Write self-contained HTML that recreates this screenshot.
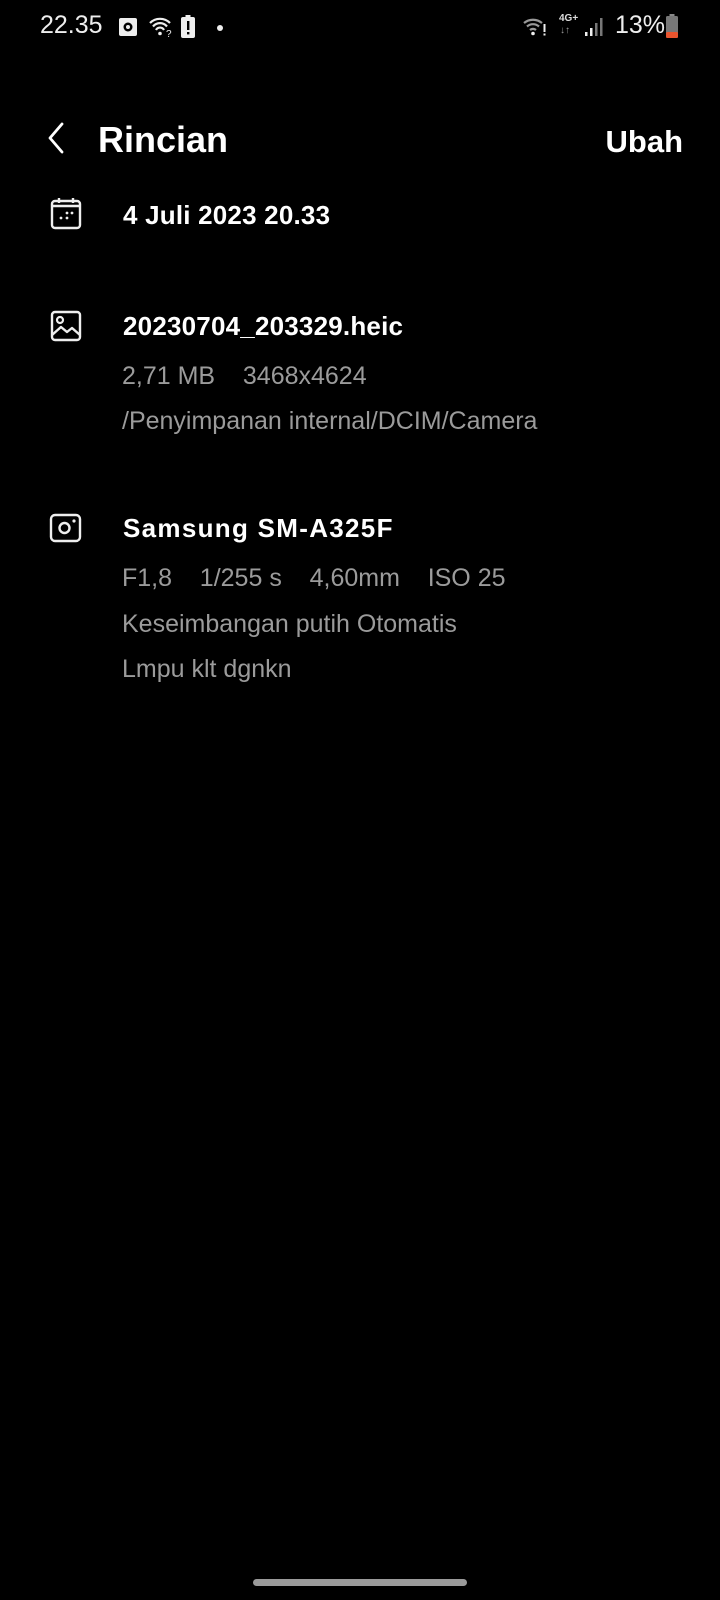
<!DOCTYPE html>
<html><head><meta charset="utf-8"><style>
body{margin:0;width:720px;height:1600px;background:#000;position:relative;overflow:hidden;font-family:"Liberation Sans",sans-serif;color:#fff}
.t{position:absolute;line-height:1;white-space:pre}
.g{color:#9b9b9b;font-size:25px}
.b{font-size:26px;font-weight:bold;letter-spacing:0.2px}
svg{position:absolute}
</style></head><body>
<div class="t" style="left:40px;top:13px;font-size:25px;color:#eee">22.35</div>
<svg style="left:118px;top:17px" width="20" height="20" viewBox="0 0 20 20"><rect x="1" y="1" width="18" height="18" rx="2" fill="#eee"/><circle cx="10" cy="10" r="4.5" fill="#000"/><circle cx="10" cy="10" r="2" fill="#eee"/></svg>
<svg style="left:148px;top:16px" width="26" height="22" viewBox="0 0 26 22"><path d="M2 7a14 14 0 0 1 20 0M5 10.5a9 9 0 0 1 14 0M8 14a4.5 4.5 0 0 1 8 0" stroke="#eee" stroke-width="2.2" fill="none"/><circle cx="12" cy="17.5" r="1.8" fill="#eee"/><text x="18" y="21" font-size="10" fill="#eee" font-family="Liberation Sans">?</text></svg>
<svg style="left:181px;top:15px" width="14" height="24" viewBox="0 0 14 24"><rect x="4.5" y="0" width="5" height="3" fill="#eee"/><rect x="0" y="2" width="14" height="21" rx="2" fill="#eee"/><rect x="6" y="6" width="2.4" height="9" fill="#000"/><rect x="6" y="17" width="2.4" height="2.4" fill="#000"/></svg>
<div style="position:absolute;left:217px;top:25px;width:6px;height:6px;border-radius:50%;background:#eee"></div>
<svg style="left:523px;top:15px" width="24" height="22" viewBox="0 0 24 22"><path d="M1 8a14 14 0 0 1 18 0M4 11.5a9 9 0 0 1 12 0M7 15a4.5 4.5 0 0 1 6 0" stroke="#999" stroke-width="2.2" fill="none"/><circle cx="10" cy="18.5" r="1.8" fill="#eee"/><rect x="20.5" y="9" width="2" height="8" fill="#eee"/><rect x="20.5" y="18.5" width="2" height="2" fill="#eee"/></svg>
<div class="t" style="left:559px;top:14px;font-size:10px;font-weight:bold;color:#ddd">4G+</div>
<div class="t" style="left:560px;top:26px;font-size:10px;color:#999">↓↑</div>
<svg style="left:584px;top:17px" width="20" height="20" viewBox="0 0 20 20"><rect x="1" y="15" width="2.5" height="4" fill="#eee"/><rect x="6" y="11" width="2.5" height="8" fill="#eee"/><rect x="11" y="6" width="2.5" height="13" fill="#777"/><rect x="16" y="1" width="2.5" height="18" fill="#777"/></svg>
<div class="t" style="left:615px;top:13px;font-size:25px;color:#eee">13%</div>
<svg style="left:666px;top:14px" width="12" height="24" viewBox="0 0 12 24"><rect x="3.5" y="0" width="5" height="2.5" fill="#888"/><rect x="0" y="2" width="12" height="22" rx="1.5" fill="#777"/><rect x="0" y="18" width="12" height="6" rx="1.5" fill="#e8542e"/></svg>

<svg style="left:46px;top:122px" width="20" height="32" viewBox="0 0 20 32"><path d="M16 2L4 16l12 14" stroke="#fff" stroke-width="2.8" fill="none" stroke-linecap="round" stroke-linejoin="round"/></svg>
<div class="t" style="left:98px;top:122px;font-size:36px;font-weight:bold">Rincian</div>
<div class="t" style="right:37px;top:126px;font-size:31px;font-weight:bold">Ubah</div>

<svg style="left:50px;top:196px" width="34" height="35" viewBox="0 0 34 35"><rect x="2" y="5" width="28" height="27" rx="3" stroke="#eee" stroke-width="2.4" fill="none"/><path d="M2 10h28M9 2v5M23 2v5" stroke="#eee" stroke-width="2.4"/><circle cx="11" cy="22" r="1.4" fill="#eee"/><circle cx="17" cy="22" r="1.4" fill="#eee"/><circle cx="17" cy="17" r="1.4" fill="#eee"/><circle cx="22" cy="17" r="1.4" fill="#eee"/></svg>
<div class="t b" style="left:123px;top:202px">4 Juli 2023 20.33</div>

<svg style="left:50px;top:310px" width="34" height="34" viewBox="0 0 34 34"><rect x="2" y="2" width="28" height="28" rx="3" stroke="#eee" stroke-width="2.4" fill="none"/><circle cx="10" cy="10" r="3" stroke="#eee" stroke-width="2.2" fill="none"/><path d="M2 25l9-8 6 5 5-4 8 7" stroke="#eee" stroke-width="2.4" fill="none" stroke-linejoin="round"/></svg>
<div class="t b" style="left:123px;top:313px">20230704_203329.heic</div>
<div class="t g" style="left:122px;top:364px">2,71 MB    3468x4624</div>
<div class="t g" style="left:122px;top:409px">/Penyimpanan internal/DCIM/Camera</div>

<svg style="left:49px;top:513px" width="34" height="30" viewBox="0 0 34 30"><rect x="2" y="2" width="29" height="26" rx="4" stroke="#eee" stroke-width="2.4" fill="none"/><circle cx="15.5" cy="15" r="5" stroke="#eee" stroke-width="2.4" fill="none"/><circle cx="25" cy="8" r="1.6" fill="#eee"/></svg>
<div class="t b" style="left:123px;top:515px;letter-spacing:1.3px">Samsung SM-A325F</div>
<div class="t g" style="left:122px;top:566px">F1,8    1/255 s    4,60mm    ISO 25</div>
<div class="t g" style="left:122px;top:612px">Keseimbangan putih Otomatis</div>
<div class="t g" style="left:122px;top:657px">Lmpu klt dgnkn</div>

<div style="position:absolute;left:253px;top:1579px;width:214px;height:7px;border-radius:4px;background:#9a9a9a"></div>
</body></html>
